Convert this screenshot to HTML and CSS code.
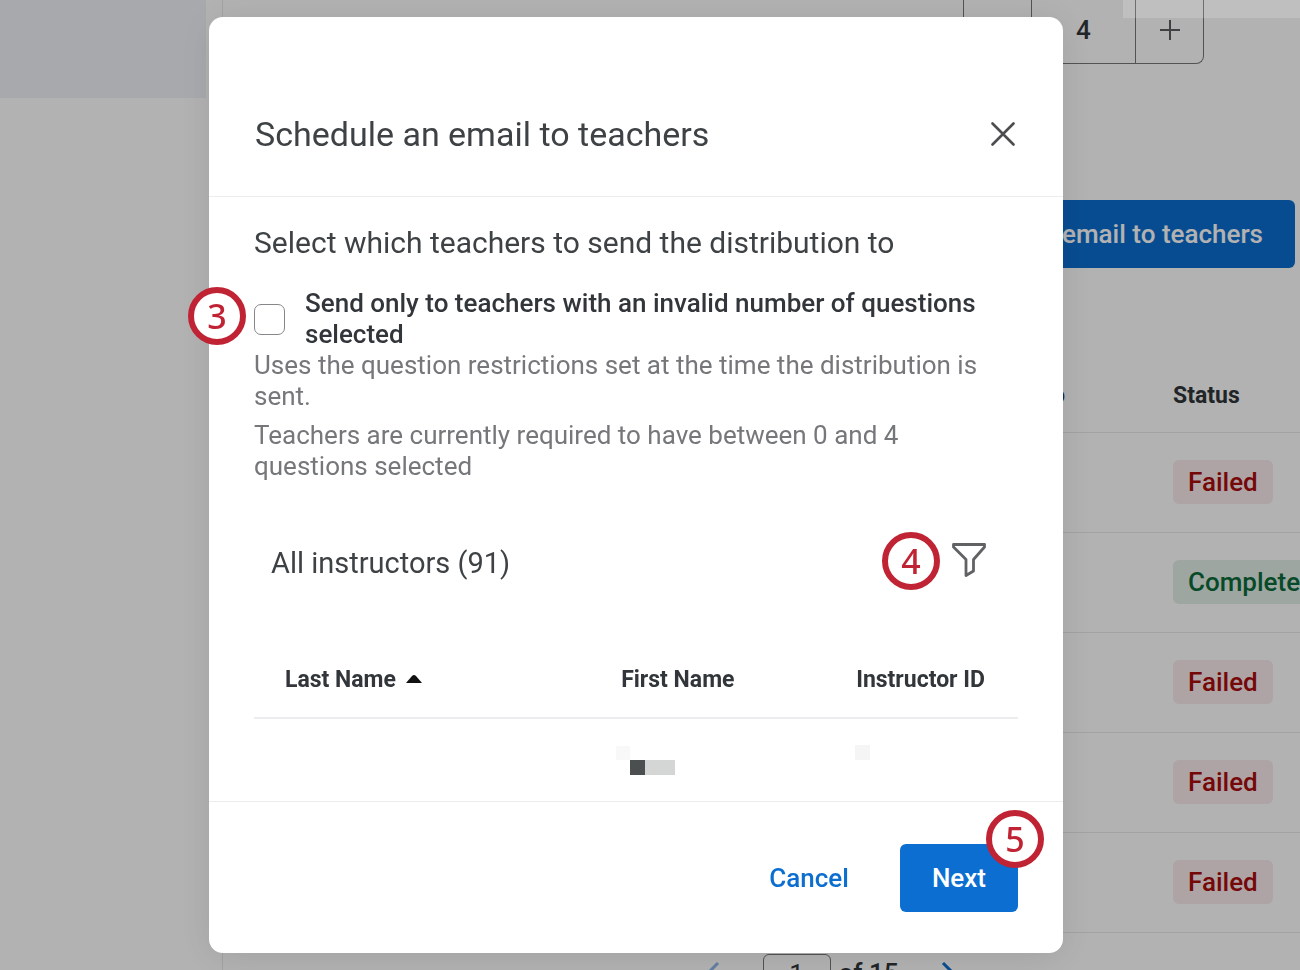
FILE: index.html
```html
<!DOCTYPE html>
<html lang="en">
<head>
  <meta charset="UTF-8">
  <title>Schedule an email to teachers</title>
  <link rel="stylesheet" href="styles.css">
</head>
<body>

  <div class="page">
    <aside class="sidebar">
      <div class="sidebar-item"></div>
    </aside>

    <main class="content">
      <div class="toolbar">
        <div class="stepper">
          <button class="step" type="button" aria-label="Decrease"></button>
          <input class="step-value" type="text" value="4" aria-label="Maximum questions">
          <button class="step" type="button" aria-label="Increase">
            <svg width="22" height="22" viewBox="0 0 22 22"><path d="M11 1v20M1 11h20" stroke="#5c5e60" stroke-width="2" fill="none"/></svg>
          </button>
        </div>
      </div>

      <div class="actions">
        <button class="btn btn-primary" type="button">email to teachers</button>
      </div>

      <table class="history">
        <thead>
          <tr><th class="col-to">o</th><th class="col-status">Status</th></tr>
        </thead>
        <tbody>
          <tr><td></td><td><span class="tag failed">Failed</span></td></tr>
          <tr><td></td><td><span class="tag completed">Completed</span></td></tr>
          <tr><td></td><td><span class="tag failed">Failed</span></td></tr>
          <tr><td></td><td><span class="tag failed">Failed</span></td></tr>
          <tr><td></td><td><span class="tag failed">Failed</span></td></tr>
        </tbody>
      </table>

      <div class="pager">
        <button class="pager-btn" type="button" aria-label="Previous page">
          <svg width="14" height="24" viewBox="0 0 14 24"><path d="M12 2L2 12l10 10" stroke="#8fb6ea" stroke-width="3" fill="none"/></svg>
        </button>
        <div class="pager-page">
          <input class="pager-input" type="text" value="1" aria-label="Page">
          <span class="pager-total">of 15</span>
        </div>
        <button class="pager-btn" type="button" aria-label="Next page">
          <svg width="14" height="24" viewBox="0 0 14 24"><path d="M2 2l10 10L2 22" stroke="#0b6ed0" stroke-width="3" fill="none"/></svg>
        </button>
      </div>
    </main>
  </div>

  <div class="overlay">
    <div class="mask"></div>
    <div class="modal" role="dialog" aria-labelledby="modal-title">
      <header class="modal-header">
        <h1 id="modal-title">Schedule an email to teachers</h1>
        <button type="button" aria-label="Close">
          <svg width="24" height="24" viewBox="0 0 24 24"><path d="M1.500 1.500l21 21M22.500 1.500l-21 21" stroke="#4b4d4f" stroke-width="2.6" stroke-linecap="round" fill="none"/></svg>
        </button>
      </header>

      <div class="modal-body">
        <h2>Select which teachers to send the distribution to</h2>

        <div class="check-row">
          <input type="checkbox" id="invalid-only">
          <label for="invalid-only">Send only to teachers with an invalid number of questions selected</label>
          <span class="callout callout-3">3</span>
        </div>
        <p class="hint">Uses the question restrictions set at the time the distribution is sent.</p>
        <p class="hint">Teachers are currently required to have between 0 and 4 questions selected</p>

        <div class="list-header">
          <h3>All instructors (91)</h3>
          <div class="filter">
            <button type="button" aria-label="Filter">
              <svg width="34" height="34" viewBox="0 0 34 34"><path d="M1.500 1.500H32.500V4L21.500 16.500V28L14 32.500V16.500L1.500 4Z" stroke="#606264" stroke-width="2.8" stroke-linejoin="round" fill="none"/></svg>
            </button>
            <span class="callout callout-4">4</span>
          </div>
        </div>

        <table class="instructors">
          <thead>
            <tr>
              <th class="col-last">Last Name <svg class="sort" width="16" height="8" viewBox="0 0 16 8"><path d="M0 8L6 1Q8-1 10 1L16 8Z" fill="#111"/></svg></th>
              <th class="col-first">First Name</th>
              <th>Instructor ID</th>
            </tr>
          </thead>
          <tbody>
            <tr>
              <td></td>
              <td><svg width="60" height="30" viewBox="0 0 60 30"><path d="M0 1h14v14H0z" fill="#f8f8f8"/><path d="M14 15h15v15H14z" fill="#4c4f50"/><path d="M29 15h30v15H29z" fill="#d4d6d6"/></svg></td>
              <td><svg width="15" height="30" viewBox="0 0 15 30"><path d="M0 0h15v15H0z" fill="#f5f5f5"/></svg></td>
            </tr>
          </tbody>
        </table>
      </div>

      <footer class="modal-footer">
        <button class="btn btn-link" type="button">Cancel</button>
        <div class="next">
          <button class="btn btn-primary" type="button">Next</button>
          <span class="callout callout-5">5</span>
        </div>
      </footer>
    </div>
    <div class="corner"></div>
  </div>

</body>
</html>
```

FILE: styles.css
```css
* {
  box-sizing: border-box;
}
html, body {
  height: 100%;
  margin: 0;
  overflow: hidden;
}
body, button, input {
  font-family: Roboto, "Liberation Sans", sans-serif;
  font-size: 26px;
  color: #32363a;
}
h1, h2, h3, p {
  margin: 0;
}
h1, h2, h3 {
  color: #3e4245;
  font-weight: 400;
}
button {
  padding: 0;
  border: 0;
  background: none;
}
svg {
  display: block;
}
table {
  width: 100%;
  border-collapse: collapse;
  table-layout: fixed;
}
th {
  padding: 0;
  font-size: 23px;
  font-weight: 700;
  text-align: left;
}
td {
  padding: 0;
}

/* page behind the dialog */
.page {
  display: flex;
}
.sidebar {
  flex: none;
  width: 223px;
  border-right: 1px solid #e6e8ea;
}
.sidebar-item {
  width: 206px;
  height: 98px;
  background: #f1f3f8;
}
.content {
  flex: 1;
}
.toolbar {
  display: flex;
  justify-content: flex-end;
  padding-right: 96px;
}
.stepper {
  display: flex;
  height: 64px;
  border: 1px solid #75777a;
  border-top: 0;
  border-radius: 0 0 8px 8px;
}
.step {
  display: flex;
  align-items: center;
  justify-content: center;
  width: 67px;
  padding-bottom: 4px;
}
.step-value {
  width: 105px;
  padding: 0 0 4px;
  border: solid #75777a;
  border-width: 0 1px;
  background: none;
  font-weight: 500;
  text-align: center;
}
.actions {
  display: flex;
  justify-content: flex-end;
  padding: 136px 5px 0 0;
}
.btn {
  height: 68px;
  padding: 0 32px;
  border-radius: 6px;
  font-weight: 500;
}
.btn-primary {
  background: #0b6ed0;
  color: #fff;
}
.history {
  margin-top: 92px;
}
.history tr {
  height: 100px;
  border-bottom: 1px solid #e6e8ea;
}
.history thead tr {
  height: 72px;
}
.history .col-to {
  padding-right: 108px;
  text-align: right;
}
.history .col-status {
  width: 127px;
}
.history td {
  white-space: nowrap;
}
.tag {
  display: inline-block;
  padding: 0 15px;
  border-radius: 6px;
  font-weight: 500;
  line-height: 44px;
}
.failed {
  background: #faeaec;
  color: #a80c0c;
}
.completed {
  background: #e3eee7;
  color: #0b6b3a;
}
.pager {
  display: flex;
  align-items: flex-start;
  justify-content: center;
  gap: 29px;
  padding: 21px 0 0 138px;
}
.pager-page {
  display: flex;
  gap: 8px;
}
.pager-btn {
  display: flex;
  justify-content: center;
  width: 42px;
  padding-top: 7px;
}
.pager-input {
  width: 68px;
  height: 40px;
  padding: 0;
  border: 1px solid #75777a;
  border-radius: 6px;
  background: none;
  text-align: center;
}
.pager-total {
  font-weight: 500;
  line-height: 38px;
}

/* dialog */
.overlay {
  position: fixed;
  inset: 0;
  padding: 17px 237px 17px 209px;
}
.mask {
  position: absolute;
  inset: 0;
  background: rgba(0, 0, 0, 0.3);
}
.corner {
  position: absolute;
  top: 0;
  right: 0;
  width: 177px;
  height: 18px;
  background: rgba(255, 255, 255, 0.16);
}
.modal {
  position: relative;
  border-radius: 14px;
  background: #fff;
  box-shadow: 0 4px 36px rgba(0, 0, 0, 0.1);
}
.modal-header {
  display: flex;
  align-items: center;
  justify-content: space-between;
  padding: 93px 48px 38px 46px;
  border-bottom: 1px solid #ececee;
}
.modal-header h1 {
  font-size: 34px;
  line-height: 48px;
}
.modal-body {
  padding: 28px 45px 0;
}
.modal-body h2 {
  font-size: 30px;
  line-height: 36px;
}
.check-row {
  position: relative;
  display: flex;
  align-items: center;
  gap: 20px;
  margin-top: 27px;
}
.check-row input {
  flex: none;
  appearance: none;
  width: 31px;
  height: 31px;
  margin: 0;
  border: 1px solid #85878a;
  border-radius: 7px;
  background: #fff;
}
.check-row label {
  font-weight: 500;
  line-height: 31px;
}
.hint {
  margin-bottom: 8px;
  color: #75777a;
  line-height: 31px;
}
.list-header {
  display: flex;
  align-items: center;
  justify-content: space-between;
  padding: 53px 32px 0 17px;
}
.list-header h3 {
  font-size: 29px;
  line-height: 36px;
}
.filter {
  position: relative;
}
.instructors {
  margin-top: 58px;
}
.instructors th,
.instructors td {
  padding-left: 31px;
}
.instructors th {
  height: 77px;
  border-bottom: 2px solid #ececee;
}
.instructors td {
  height: 83px;
  padding-left: 26px;
}
.instructors td + td + td {
  padding-left: 30px;
}
.col-last {
  width: 44%;
}
.col-first {
  width: 235px;
}
.sort {
  display: inline-block;
  margin-left: 4px;
  vertical-align: 4px;
}
.modal-footer {
  display: flex;
  justify-content: flex-end;
  gap: 19px;
  padding: 42px 45px 41px;
  border-top: 1px solid #ececee;
}
.btn-link {
  color: #0b6ed0;
}
.next {
  position: relative;
}

/* numbered callouts */
.callout {
  position: absolute;
  width: 58px;
  height: 58px;
  border: 6px solid #c02434;
  border-radius: 50%;
  background: #fff;
  color: #c02434;
  font-family: "Noto Sans", "Open Sans", sans-serif;
  font-size: 34px;
  font-weight: 500;
  line-height: 46px;
  text-align: center;
}
.callout-3 {
  top: -1px;
  left: -66px;
}
.callout-4 {
  top: -11px;
  right: 46px;
}
.callout-5 {
  top: -34px;
  right: -26px;
}
```
